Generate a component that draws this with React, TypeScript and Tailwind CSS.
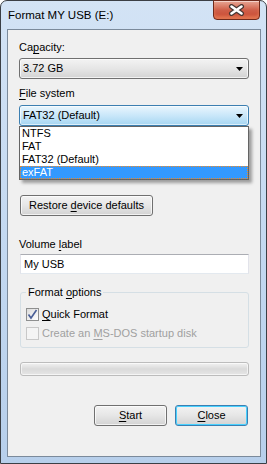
const ui = { fontFamily: '"Liberation Sans", Arial, sans-serif' };

function Arrow() {
  return (
    <svg width="7" height="4" viewBox="0 0 7 4" className="block">
      <path d="M0 0h7L3.5 4z" fill="#000" />
    </svg>
  );
}

function U({ children }: { children: string }) {
  return <span className="underline underline-offset-2">{children}</span>;
}

function CloseGlyph() {
  return (
    <svg width="17" height="12" viewBox="0 0 17 12" className="block">
      <path d="M3.5 2.5l10 7M13.5 2.5l-10 7" stroke="#463632" strokeWidth="5" strokeLinecap="round" />
      <path d="M3.5 2.5l10 7M13.5 2.5l-10 7" stroke="#fff" strokeWidth="2.6" strokeLinecap="round" />
    </svg>
  );
}

function CheckBox({ checked, disabled }: { checked?: boolean; disabled?: boolean }) {
  return (
    <div
      className={`flex h-[13px] w-[13px] items-center justify-center border ${
        disabled
          ? "border-[#c8c8c8] bg-[#f4f4f4]"
          : "border-[#8e8f8f] bg-gradient-to-br from-[#dcdcdc] to-[#ffffff]"
      }`}
    >
      {checked && (
        <svg width="11" height="11" viewBox="0 0 11 11" className="block">
          <path d="M1.5 5.5l2.5 3.5 5.5-8" stroke="#4a5f97" strokeWidth="1.6" fill="none" />
        </svg>
      )}
    </div>
  );
}

const listItems = ["NTFS", "FAT", "FAT32 (Default)"];

export default function App() {
  return (
    <div className="h-[464px] w-[267px] bg-white text-[11px] leading-[15px] text-black" style={ui}>
      <div className="flex h-[464px] w-[267px] flex-col rounded-t-[7px] border border-[#3b3f45] bg-gradient-to-b from-[#d3e3f5] via-[#c4d9f1] to-[#b7cfeb]">
        {/* title bar */}
        <div className="flex h-[28px] items-start justify-between">
          <span className="mt-[6px] pl-[7px] text-[11.5px] leading-[16px] text-black">Format MY USB (E:)</span>
          <div className="mr-[6px] mt-[-1px] flex h-[20px] w-[47px] items-center justify-center rounded-b-[4px] border border-[#6e2a1c] bg-gradient-to-b from-[#e7a695] via-[#cf5f49] to-[#c8452c] shadow-[inset_0_1px_0_rgba(255,255,255,0.5),inset_0_-3px_3px_rgba(255,170,120,0.45)]">
            <CloseGlyph />
          </div>
        </div>

        {/* client area */}
        <div className="mb-[6px] ml-[6px] mr-[5px] flex flex-1 flex-col border border-[#7b8a9b] bg-[#f0f0f0] pl-[11px] pt-[10px]">
          <div className="h-[15px]">
            Ca<U>p</U>acity:
          </div>
          <div className="mt-[3px] flex h-[21px] w-[230px] items-center justify-between rounded-[3px] border border-[#707070] bg-gradient-to-b from-[#f3f3f3] via-[#e6e6e6] to-[#d3d3d3] pl-[3px] pr-[5px] shadow-[inset_0_0_0_1px_rgba(255,255,255,0.7)]">
            <span>3.72 GB</span>
            <Arrow />
          </div>

          <div className="mt-[7px] h-[15px]">
            <U>F</U>ile system
          </div>
          <div className="relative mt-[4px] w-[230px]">
            <div className="flex h-[21px] w-[230px] items-center justify-between rounded-[3px] border border-[#3c7fb1] bg-gradient-to-b from-[#eaf6fd] via-[#c9e7f9] to-[#a6d6f2] pl-[3px] pr-[5px] shadow-[inset_0_0_0_1px_rgba(255,255,255,0.6)]">
              <span>FAT32 (Default)</span>
              <Arrow />
            </div>
            <div className="absolute left-0 top-[21px] z-10 w-[230px] border border-[#646464] bg-white shadow-[3px_3px_3px_rgba(0,0,0,0.35)]">
              {listItems.map((t) => (
                <div key={t} className="h-[13px] pl-[2px] leading-[13px]">
                  {t}
                </div>
              ))}
              <div className="h-[13px] border border-dotted border-[#f08a24] bg-[#3399ff] pl-[1px] leading-[11px] text-white">
                exFAT
              </div>
            </div>
          </div>

          <div className="mt-[69px] ml-[1px] flex h-[21px] w-[133px] items-center justify-center rounded-[3px] border border-[#707070] bg-gradient-to-b from-[#f3f3f3] via-[#e6e6e6] to-[#d3d3d3] shadow-[inset_0_0_0_1px_rgba(255,255,255,0.7)]">
            <span>
              Restore <U>d</U>evice defaults
            </span>
          </div>

          <div className="mt-[21px] h-[15px]">
            Volume <U>l</U>abel
          </div>
          <div className="ml-[1px] mt-[2px] flex h-[20px] w-[229px] items-center border border-[#abadb3] border-x-[#e2e3ea] border-b-[#e3e9ef] bg-white pl-[3px]">
            My USB
          </div>

          <fieldset className="ml-[1px] mt-[11px] w-[229px] rounded-[3px] border border-[#d5dfe5] pb-[6px] pl-[5px]">
            <legend className="px-[2px]">
              Format <U>o</U>ptions
            </legend>
            <div className="mt-[7px] flex h-[15px] items-center gap-[3px]">
              <CheckBox checked />
              <span>
                <U>Q</U>uick Format
              </span>
            </div>
            <div className="mt-[4px] flex h-[15px] items-center gap-[3px] text-[#a0a0a0]">
              <CheckBox disabled />
              <span>
                Create an <U>M</U>S-DOS startup disk
              </span>
            </div>
          </fieldset>

          <div className="ml-[1px] mt-[14px] h-[14px] w-[229px] rounded-[3px] border border-[#bcbcbc] bg-gradient-to-b from-[#f2f2f2] via-[#dadada] to-[#e6e6e6] shadow-[inset_0_0_0_1px_rgba(255,255,255,0.6)]" />

          <div className="mt-[29px] flex justify-end gap-[8px] pr-[12px]">
            <div className="flex h-[21px] w-[73px] items-center justify-center rounded-[3px] border border-[#707070] bg-gradient-to-b from-[#f3f3f3] via-[#e6e6e6] to-[#d3d3d3] shadow-[inset_0_0_0_1px_rgba(255,255,255,0.7)]">
              <span>
                <U>S</U>tart
              </span>
            </div>
            <div className="flex h-[21px] w-[73px] items-center justify-center rounded-[3px] border border-[#3c7fb1] bg-gradient-to-b from-[#f3f3f3] via-[#e6e6e6] to-[#d3d3d3] shadow-[inset_0_0_0_1px_#48d1ff]">
              <span>
                <U>C</U>lose
              </span>
            </div>
          </div>
        </div>
      </div>
    </div>
  );
}
